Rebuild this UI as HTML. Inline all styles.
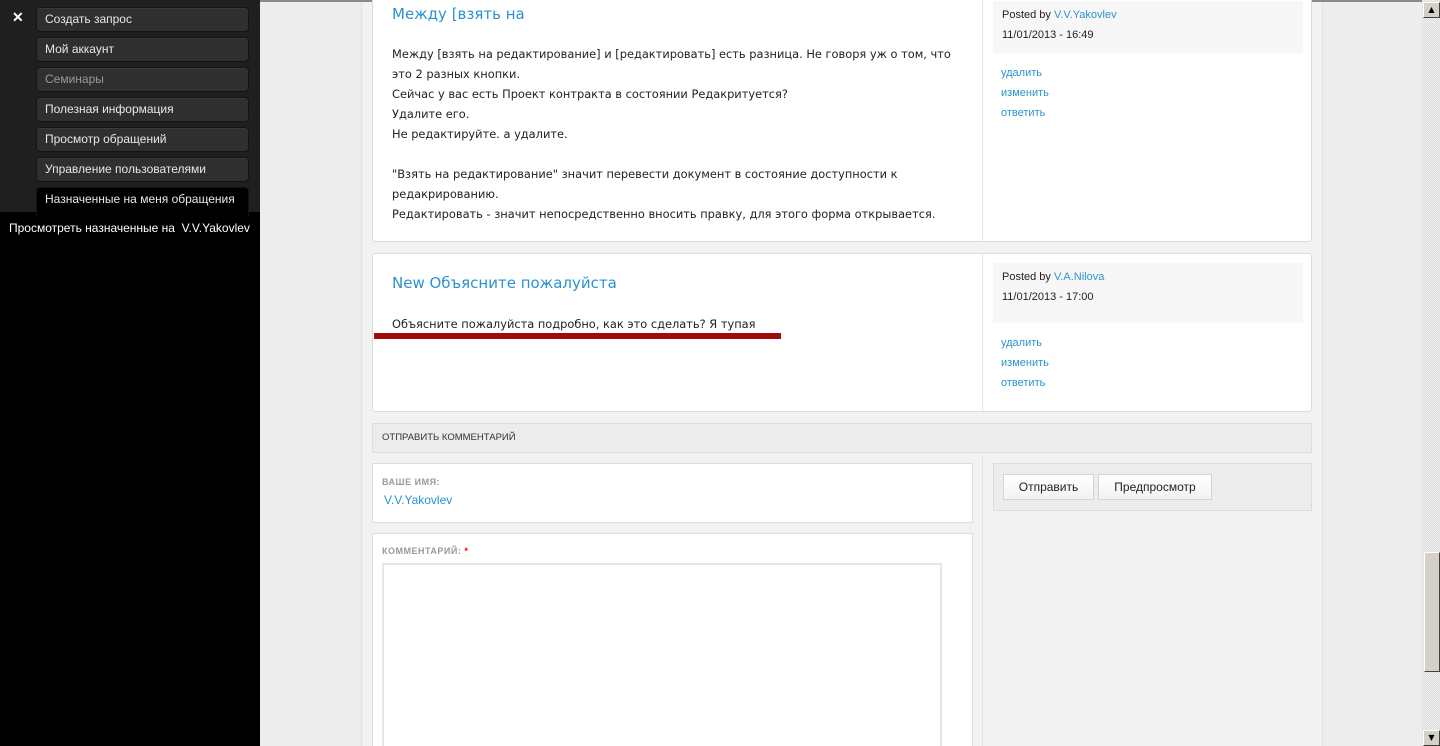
<!DOCTYPE html>
<html><head><meta charset="utf-8"><style>
*{box-sizing:border-box}
html,body{margin:0;width:1440px;height:746px;overflow:hidden}
body{background:#ededed;font-family:"DejaVu Sans","Liberation Sans",sans-serif;position:relative}
.abs{position:absolute}
a{color:#2a93cf;text-decoration:none}
.side{left:0;top:0;width:260px;height:746px;background:#000}
.sidetop{left:0;top:0;width:260px;height:212px;background:#1f1f1f}
.btn{position:absolute;left:36px;width:213px;height:25px;background:#2f2f2f;border:1px solid #141414;border-radius:4px;color:#e8e8e8;font-family:"Liberation Sans",sans-serif;font-size:12px;line-height:23px;padding-left:8px;box-shadow:inset 0 1px 0 #3a3a3a}
.col{left:361px;top:0;width:962px;height:746px;background:#f2f2f2;border-left:1px solid #e2e2e2;border-right:1px solid #e2e2e2}
.card{position:absolute;left:372px;width:940px;background:#fff;border:1px solid #dcdcdc;border-radius:3px}
.txt{font-size:11.4px;color:#222;line-height:20px}
.meta{position:absolute;left:620px;width:310px;background:#f7f7f7;font-size:11px;color:#222;padding:4px 9px;line-height:20px;font-family:"Liberation Sans",sans-serif}
.links{position:absolute;left:628px;font-size:11px;line-height:20px;font-family:"Liberation Sans",sans-serif}
.divd{position:absolute;left:609px;top:0;bottom:0;border-left:1px solid #e6e6e6}
.title{position:absolute;left:19px;font-size:15px;color:#2a93cf}
.fb{border:1px solid #dcdcdc;background:#fff;position:absolute}
.lbl{font-size:9px;font-weight:bold;color:#999;letter-spacing:.5px;font-family:"Liberation Sans",sans-serif}
.sbtn{position:absolute;top:10px;height:26px;background:linear-gradient(#fff,#f2f2f2);border:1px solid #d4d4d4;font-size:12px;line-height:24px;text-align:center;color:#222;font-family:"Liberation Sans",sans-serif}
</style></head><body>
<div class="abs side"></div>
<div class="abs sidetop"></div>
<div class="abs" style="left:12px;top:9px;color:#fff;font-size:14px;font-weight:bold;font-family:'Liberation Sans',sans-serif">✕</div>
<div class="btn" style="top:7px">Создать запрос</div>
<div class="btn" style="top:37px">Мой аккаунт</div>
<div class="btn" style="top:67px;color:#999">Семинары</div>
<div class="btn" style="top:97px">Полезная информация</div>
<div class="btn" style="top:127px">Просмотр обращений</div>
<div class="btn" style="top:157px">Управление пользователями</div>
<div class="btn" style="top:187px;height:30px;background:#000;border-bottom:none;border-radius:4px 4px 0 0;box-shadow:none">Назначенные на меня обращения</div>
<div class="abs" style="left:9px;top:221px;color:#fff;font-size:12px;font-family:'Liberation Sans',sans-serif">Просмотреть назначенные на &nbsp;V.V.Yakovlev</div>

<div class="abs col"></div>
<div class="abs" style="left:260px;top:0;width:1162px;height:2px;background:#8a8a8a"></div>

<div class="card" style="top:-10px;height:252px">
 <div class="divd"></div>
 <div class="title" style="top:14px">Между [взять на</div>
 <div class="txt abs" style="left:19px;top:53px;width:580px">Между [взять на редактирование] и [редактировать] есть разница. Не говоря уж о том, что это 2 разных кнопки.<br>Сейчас у вас есть Проект контракта в состоянии Редакритуется?<br>Удалите его.<br>Не редактируйте. а удалите.<br><br>"Взять на редактирование" значит перевести документ в состояние доступности к редакрированию.<br>Редактировать - значит непосредственно вносить правку, для этого форма открывается.</div>
 <div class="meta" style="top:10px;height:52px">Posted by <a>V.V.Yakovlev</a><br>11/01/2013 - 16:49</div>
 <div class="links" style="top:72px"><a>удалить</a><br><a>изменить</a><br><a>ответить</a></div>
</div>

<div class="card" style="top:253px;height:159px">
 <div class="divd"></div>
 <div class="title" style="top:20px">New Объясните пожалуйста</div>
 <div class="txt abs" style="left:19px;top:60px">Объясните пожалуйста подробно, как это сделать? Я тупая</div>
 <div class="abs" style="left:1px;top:79px;width:407px;height:6px;background:#a30b0b"></div>
 <div class="meta" style="top:9px;height:60px">Posted by <a>V.A.Nilova</a><br>11/01/2013 - 17:00</div>
 <div class="links" style="top:79px"><a>удалить</a><br><a>изменить</a><br><a>ответить</a></div>
</div>

<div class="abs" style="left:372px;top:423px;width:940px;height:30px;background:#ececec;border:1px solid #dcdcdc;font-size:9.5px;line-height:28px;padding-left:9px;color:#333;font-family:'Liberation Sans',sans-serif">ОТПРАВИТЬ КОММЕНТАРИЙ</div>

<div class="abs" style="left:982px;top:455px;height:291px;border-left:1px solid #e4e4e4"></div>
<div class="fb" style="left:372px;top:463px;width:601px;height:60px;padding:13px 9px">
 <div class="lbl">ВАШЕ ИМЯ:</div>
 <div style="font-size:12px;margin-top:6px;padding-left:2px;font-family:'Liberation Sans',sans-serif"><a>V.V.Yakovlev</a></div>
</div>
<div class="fb" style="left:372px;top:533px;width:601px;height:213px;padding:12px 9px;border-bottom:none">
 <div class="lbl">КОММЕНТАРИЙ: <span style="color:#e00">*</span></div>
 <div style="position:absolute;left:9px;top:29px;width:560px;height:190px;border:2px solid #e6e6e6;background:#fff"></div>
</div>
<div class="abs" style="left:993px;top:463px;width:319px;height:48px;background:#ececec;border:1px solid #dcdcdc">
 <div class="sbtn" style="left:9px;width:91px">Отправить</div>
 <div class="sbtn" style="left:104px;width:114px">Предпросмотр</div>
</div>

<div class="abs" style="left:1422px;top:0;width:18px;height:746px;background-color:#eee;background-image:repeating-conic-gradient(#d8d8d8 0 25%,#f4f4f4 0 50%);background-size:2px 2px"></div>
<div class="abs" style="left:1423px;top:2px;width:17px;height:16px;background:#d4d0c8;border:1px solid;border-color:#fff #404040 #404040 #fff;font-size:8px;text-align:center;line-height:13px">▲</div>
<div class="abs" style="left:1424px;top:552px;width:16px;height:120px;background:#d4d0c8;border:1px solid;border-color:#fff #404040 #404040 #fff"></div>
<div class="abs" style="left:1423px;top:730px;width:17px;height:16px;background:#d4d0c8;border:1px solid;border-color:#fff #404040 #404040 #fff;font-size:8px;text-align:center;line-height:13px">▼</div>
</body></html>
